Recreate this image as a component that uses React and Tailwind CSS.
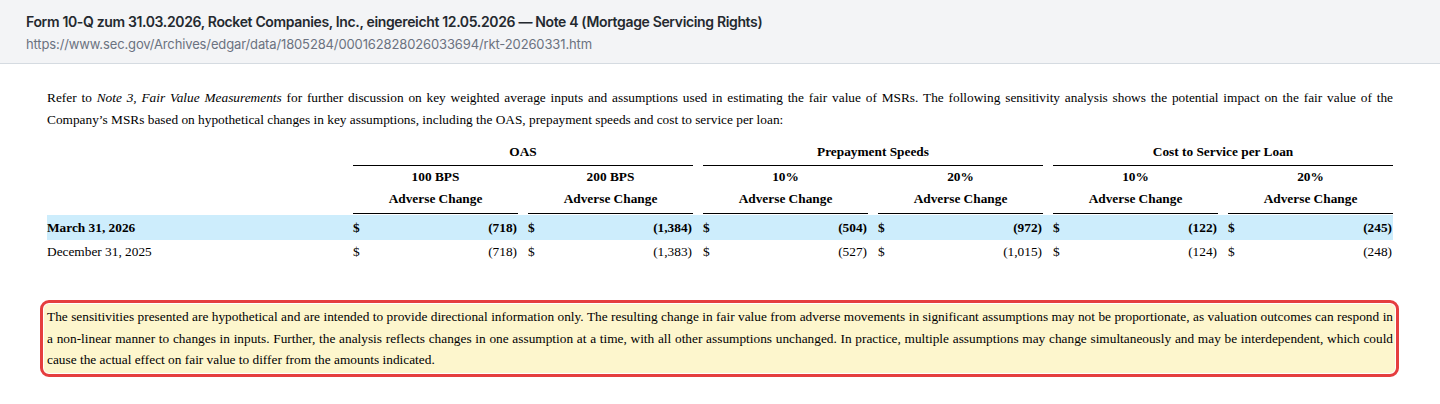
import React from "react";

const serif = { fontFamily: '"Liberation Serif", "Times New Roman", serif' };

const groups = [
  { name: "OAS", cols: [["100 BPS", "Adverse Change"], ["200 BPS", "Adverse Change"]] },
  { name: "Prepayment Speeds", cols: [["10%", "Adverse Change"], ["20%", "Adverse Change"]] },
  { name: "Cost to Service per Loan", cols: [["10%", "Adverse Change"], ["20%", "Adverse Change"]] },
];

const rows = [
  { label: "March 31, 2026", vals: ["(718)", "(1,384)", "(504)", "(972)", "(122)", "(245)"], bold: true },
  { label: "December 31, 2025", vals: ["(718)", "(1,383)", "(527)", "(1,015)", "(124)", "(248)"], bold: false },
];

export default function App() {
  return (
    <div className="min-h-[404px] bg-white">
      <div
        className="h-[64px] border-b border-[#d5dbe1] bg-[#f3f4f6] pl-[26px] pt-[12px]"
        style={{ fontFamily: 'Inter, "Noto Sans", sans-serif' }}
      >
        <div className="text-[14px] font-semibold leading-[20px] tracking-[-0.025em] text-[#24292f]">
          Form 10-Q zum 31.03.2026, Rocket Companies, Inc., eingereicht 12.05.2026 — Note 4 (Mortgage Servicing Rights)
        </div>
        <div className="mt-[2px] text-[13px] leading-[20px] tracking-[-0.01em] text-[#6b7280]">
          https://www.sec.gov/Archives/edgar/data/1805284/000162828026033694/rkt-20260331.htm
        </div>
      </div>

      <div className="px-[47px] text-[13.33px] text-black" style={serif}>
        <p className="mt-[23px] text-justify leading-[22px]">
          Refer to <i>Note 3, Fair Value Measurements</i> for further discussion on key weighted average inputs and
          assumptions used in estimating the fair value of MSRs. The following sensitivity analysis shows the potential
          impact on the fair value of the Company’s MSRs based on hypothetical changes in key assumptions, including the
          OAS, prepayment speeds and cost to service per loan:
        </p>

        <div className="mt-[11px]">
          <div className="flex gap-[10px]">
            <div className="w-[296px] shrink-0" />
            {groups.map((g) => (
              <div
                key={g.name}
                className="w-[340px] shrink-0 border-b border-black pb-[3px] text-center font-bold leading-[20px]"
              >
                {g.name}
              </div>
            ))}
          </div>
          <div className="flex gap-[10px]">
            <div className="w-[296px] shrink-0" />
            {groups.flatMap((g) =>
              g.cols.map((c, i) => (
                <div
                  key={g.name + i}
                  className="w-[165px] shrink-0 border-b border-black pb-[3px] text-center font-bold leading-[22px]"
                >
                  <div>{c[0]}</div>
                  <div>{c[1]}</div>
                </div>
              ))
            )}
          </div>
          {rows.map((r) => (
            <div
              key={r.label}
              className={
                r.bold
                  ? "mt-[1px] flex h-[25px] items-center gap-[10px] bg-[#cdedfc] font-bold"
                  : "flex h-[23px] items-center gap-[10px]"
              }
            >
              <div className="w-[296px] shrink-0">{r.label}</div>
              {r.vals.map((v, i) => (
                <div key={i} className="flex w-[165px] shrink-0 justify-between pr-[1px]">
                  <span>$</span>
                  <span>{v}</span>
                </div>
              ))}
            </div>
          ))}
        </div>

        <div className="-ml-[7px] -mr-[6px] mt-[37px] rounded-[9px] border-[3px] border-[#e53e3e] p-px">
          <p className="rounded-[5px] bg-[#fdf6cd] py-[2px] pl-[3px] pr-[2px] text-justify leading-[21.5px]">
            The sensitivities presented are hypothetical and are intended to provide directional information only. The
            resulting change in fair value from adverse movements in significant assumptions may not be proportionate, as
            valuation outcomes can respond in a non-linear manner to changes in inputs. Further, the analysis reflects
            changes in one assumption at a time, with all other assumptions unchanged. In practice, multiple assumptions
            may change simultaneously and may be interdependent, which could cause the actual effect on fair value to
            differ from the amounts indicated.
          </p>
        </div>
      </div>
    </div>
  );
}
